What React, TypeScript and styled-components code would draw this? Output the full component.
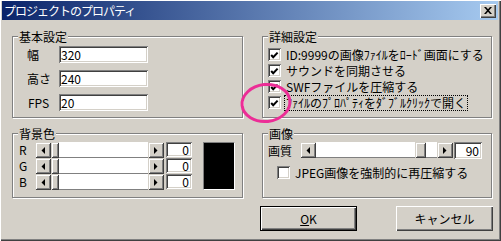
import React from 'react';
import styled, { createGlobalStyle } from 'styled-components';

const face = '#d4d0c8';

const GlobalStyle = createGlobalStyle`
  html, body {
    margin: 0;
    padding: 0;
    background: ${face};
  }
  body {
    font-family: "Noto Sans CJK JP", "Liberation Sans", sans-serif;
    font-size: 12px;
    color: #000;
  }
`;

const raised = `
  box-shadow: inset 1px 1px 0 ${face}, inset -1px -1px 0 #404040,
    inset 2px 2px 0 #fff, inset -2px -2px 0 #808080;
`;

const sunken = `
  box-shadow: inset 1px 1px 0 #808080, inset -1px -1px 0 #fff,
    inset 2px 2px 0 #404040, inset -2px -2px 0 ${face};
`;

const Window = styled.div`
  position: relative;
  width: 501px;
  height: 241px;
  box-sizing: border-box;
  padding: 1px 3px 2px 2px;
  background: ${face};
  box-shadow: inset 1px 1px 0 #fff, inset -1px -1px 0 #404040, inset -2px -2px 0 #808080;
  display: flex;
  flex-direction: column;
  overflow: hidden;
`;

const TitleBar = styled.div`
  height: 19px;
  flex-shrink: 0;
  display: flex;
  align-items: center;
  justify-content: space-between;
  padding: 0 2px 0 2px;
  background: linear-gradient(to right, #0a246a, #a6caf0);
`;

const TitleText = styled.span`
  color: #fff;
  font-size: 12px;
  line-height: 19px;
  letter-spacing: -1px;
  white-space: nowrap;
`;

const CloseButton = styled.div`
  width: 16px;
  height: 14px;
  background: ${face};
  box-shadow: inset 1px 1px 0 #fff, inset -1px -1px 0 #404040, inset -2px -2px 0 #808080;
  display: flex;
  align-items: center;
  justify-content: center;
`;

const Body = styled.div`
  display: flex;
  gap: 19px;
  padding: 16px 0 0 10px;
`;

const Column = styled.div<{ $w: number }>`
  width: ${(p) => p.$w}px;
  display: flex;
  flex-direction: column;
`;

const Group = styled.div<{ $h: number; $mt?: number; $pad: string; $gap?: number }>`
  position: relative;
  box-sizing: border-box;
  height: ${(p) => p.$h}px;
  margin-top: ${(p) => p.$mt ?? 0}px;
  padding: ${(p) => p.$pad};
  border: 1px solid #808080;
  box-shadow: inset 1px 1px 0 #fff, 1px 1px 0 #fff;
  display: flex;
  flex-direction: column;
  gap: ${(p) => p.$gap ?? 0}px;
`;

const Caption = styled.span`
  position: absolute;
  top: -7px;
  left: 5px;
  padding: 0 1px;
  line-height: 13px;
  background: ${face};
  white-space: nowrap;
`;

const FieldRow = styled.div`
  display: flex;
  align-items: center;
  height: 17px;
`;

const FieldLabel = styled.span<{ $indent?: number }>`
  width: 32px;
  padding-left: ${(p) => p.$indent ?? 0}px;
  box-sizing: border-box;
  line-height: 17px;
`;

const TextBox = styled.div`
  width: 89px;
  height: 17px;
  box-sizing: border-box;
  padding-left: 2px;
  background: #fff;
  line-height: 17px;
  ${sunken}
`;

const ColorArea = styled.div`
  display: flex;
  align-items: flex-start;
`;

const Channels = styled.div`
  display: flex;
  flex-direction: column;
`;

const ChannelRow = styled.div`
  display: flex;
  align-items: flex-start;
  height: 16px;
`;

const ChannelLabel = styled.span`
  width: 16px;
  line-height: 15px;
`;

const NumBox = styled.div<{ $w: number; $h: number; $ml: number }>`
  width: ${(p) => p.$w}px;
  height: ${(p) => p.$h}px;
  margin-left: ${(p) => p.$ml}px;
  box-sizing: border-box;
  padding-right: 3px;
  text-align: right;
  line-height: ${(p) => p.$h}px;
  background: #fff;
  ${sunken}
`;

const Swatch = styled.div`
  width: 32px;
  height: 48px;
  margin-left: 11px;
  box-sizing: border-box;
  background: #000;
  border: 1px solid;
  border-color: #808080 #fff #fff #808080;
`;

const Scroll = styled.div<{ $w: number }>`
  width: ${(p) => p.$w}px;
  height: 16px;
  display: flex;
  flex-shrink: 0;
`;

const ArrowButton = styled.div`
  width: 16px;
  height: 16px;
  flex-shrink: 0;
  background: ${face};
  display: flex;
  align-items: center;
  justify-content: center;
  ${raised}
`;

const Track = styled.div`
  flex: 1;
  display: flex;
  background: #fff;
  box-shadow: inset 0 -1px 0 #808080;
`;

const Thumb = styled.div<{ $w: number }>`
  width: ${(p) => p.$w}px;
  height: 16px;
  background: ${face};
  ${raised}
`;

const CheckRow = styled.div<{ $indent?: number; $mt?: number }>`
  display: flex;
  align-items: center;
  height: 15px;
  margin-left: ${(p) => p.$indent ?? 0}px;
  margin-top: ${(p) => p.$mt ?? 0}px;
`;

const Box = styled.div`
  width: 13px;
  height: 13px;
  flex-shrink: 0;
  background: #fff;
  ${sunken}
`;

const CheckLabel = styled.span<{ $focus?: boolean }>`
  margin-left: 3px;
  padding: 0 1px;
  line-height: 14px;
  white-space: nowrap;
  border: 1px ${(p) => (p.$focus ? 'dotted #000' : 'solid transparent')};
`;

const QualityRow = styled.div`
  display: flex;
  align-items: center;
  height: 16px;
`;

const ButtonRow = styled.div`
  display: flex;
  justify-content: space-between;
  margin: 8px -1px 0 -2px;
`;

const PushButton = styled.div<{ $default?: boolean }>`
  width: 97px;
  height: 25px;
  box-sizing: border-box;
  background: ${face};
  display: flex;
  align-items: center;
  justify-content: center;
  border: 1px solid ${(p) => (p.$default ? '#000' : 'transparent')};
  box-shadow: ${(p) =>
    p.$default
      ? 'inset 1px 1px 0 #fff, inset -1px -1px 0 #404040, inset -2px -2px 0 #808080'
      : 'inset 0 0 0 0 transparent'};
  ${(p) =>
    p.$default
      ? ''
      : `border: none; box-shadow: inset 1px 1px 0 #fff, inset -1px -1px 0 #404040, inset -2px -2px 0 #808080;`}
`;

const Highlight = styled.svg`
  position: absolute;
  left: 239px;
  top: 81px;
  pointer-events: none;
`;

function Arrow({ dir }: { dir: 'left' | 'right' }) {
  return (
    <svg width="4" height="7" viewBox="0 0 4 7">
      <polygon points={dir === 'left' ? '4,0 4,7 0.5,3.5' : '0,0 0,7 3.5,3.5'} fill="#000" />
    </svg>
  );
}

function ScrollBar({ width, value, max, thumb }: { width: number; value: number; max: number; thumb: number }) {
  const free = width - 32 - thumb;
  const offset = Math.round((free * value) / max);
  return (
    <Scroll $w={width}>
      <ArrowButton>
        <Arrow dir="left" />
      </ArrowButton>
      <Track>
        <Thumb $w={thumb} style={{ marginLeft: offset }} />
      </Track>
      <ArrowButton>
        <Arrow dir="right" />
      </ArrowButton>
    </Scroll>
  );
}

function CheckBox({ checked }: { checked: boolean }) {
  return (
    <Box>
      {checked && (
        <svg width="13" height="13" viewBox="0 0 13 13">
          <path d="M3.2 6 L5.2 8.2 L9.6 3.6" stroke="#000" strokeWidth="2" fill="none" />
        </svg>
      )}
    </Box>
  );
}

const basic = [
  { label: '幅', value: '320', indent: 0 },
  { label: '高さ', value: '240', indent: 0 },
  { label: 'FPS', value: '20', indent: 1 },
];

const options = [
  { text: 'ID:9999の画像ﾌｧｲﾙをﾛｰﾄﾞ画面にする', focus: false },
  { text: 'サウンドを同期させる', focus: false },
  { text: 'SWFファイルを圧縮する', focus: false },
  { text: 'ﾌｧｲﾙのﾌﾟﾛﾊﾟﾃｨをﾀﾞﾌﾞﾙｸﾘｯｸで開く', focus: true },
];

export default function App() {
  return (
    <>
      <GlobalStyle />
      <Window>
        <TitleBar>
          <TitleText>プロジェクトのプロパティ</TitleText>
          <CloseButton>
            <svg width="8" height="7" viewBox="0 0 8 7">
              <path d="M0 0h2l2 2.3L6 0h2L5 3.5 8 7H6L4 4.7 2 7H0l3-3.5z" fill="#000" />
            </svg>
          </CloseButton>
        </TitleBar>

        <Body>
          <Column $w={231}>
            <Group $h={82} $pad="9px 0 0 14px" $gap={7}>
              <Caption>基本設定</Caption>
              {basic.map((f) => (
                <FieldRow key={f.label}>
                  <FieldLabel $indent={f.indent}>{f.label}</FieldLabel>
                  <TextBox>{f.value}</TextBox>
                </FieldRow>
              ))}
            </Group>

            <Group $h={65} $mt={15} $pad="8px 0 0 6px">
              <Caption>背景色</Caption>
              <ColorArea>
                <Channels>
                  {['R', 'G', 'B'].map((c) => (
                    <ChannelRow key={c}>
                      <ChannelLabel>{c}</ChannelLabel>
                      <ScrollBar width={129} value={0} max={255} thumb={8} />
                      <NumBox $w={26} $h={15} $ml={2}>
                        0
                      </NumBox>
                    </ChannelRow>
                  ))}
                </Channels>
                <Swatch />
              </ColorArea>
            </Group>
          </Column>

          <Column $w={230}>
            <Group $h={82} $pad="10px 0 0 5px" $gap={1}>
              <Caption>詳細設定</Caption>
              {options.map((o) => (
                <CheckRow key={o.text}>
                  <CheckBox checked />
                  <CheckLabel $focus={o.focus}>{o.text}</CheckLabel>
                </CheckRow>
              ))}
            </Group>

            <Group $h={65} $mt={15} $pad="8px 0 0 5px">
              <Caption>画像</Caption>
              <QualityRow>
                <FieldLabel>画質</FieldLabel>
                <ScrollBar width={153} value={90} max={100} thumb={11} />
                <NumBox $w={28} $h={17} $ml={1}>
                  90
                </NumBox>
              </QualityRow>
              <CheckRow $indent={9} $mt={7}>
                <CheckBox checked={false} />
                <CheckLabel>JPEG画像を強制的に再圧縮する</CheckLabel>
              </CheckRow>
            </Group>

            <ButtonRow>
              <PushButton $default>
                <span>
                  <u>O</u>K
                </span>
              </PushButton>
              <PushButton>キャンセル</PushButton>
            </ButtonRow>
          </Column>
        </Body>

        <Highlight width="56" height="44" viewBox="0 0 56 44">
          <ellipse cx="27" cy="22" rx="24" ry="18.5" transform="rotate(-6 27 22)" fill="none" stroke="#ec2d96" strokeWidth="3" />
        </Highlight>
      </Window>
    </>
  );
}
